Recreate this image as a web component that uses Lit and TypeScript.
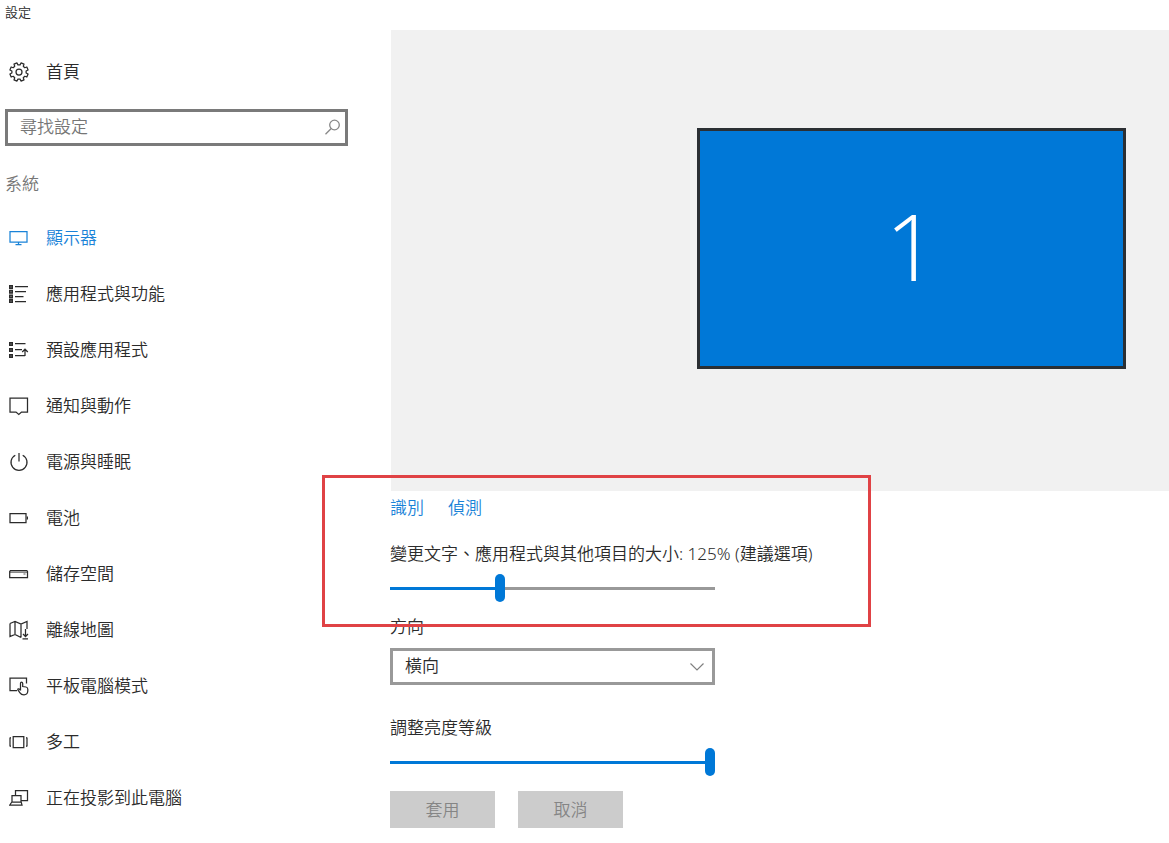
import { LitElement, html, css, svg } from "lit";
import { customElement, property, state } from "lit/decorators.js";
import { classMap } from "lit/directives/class-map.js";

/* Outline of an eight-tooth cog centred in a 20 x 20 box. */
const cogPath = (() => {
  const points: string[] = [];
  for (let i = 0; i < 8; i++) {
    const mid = 22.5 + i * 45;
    for (const [offset, radius] of [[-14, 7.2], [-10, 9.3], [10, 9.3], [14, 7.2]]) {
      const angle = ((mid + offset) * Math.PI) / 180;
      points.push(`${(10 + radius * Math.cos(angle)).toFixed(2)} ${(10 + radius * Math.sin(angle)).toFixed(2)}`);
    }
  }
  return `M${points.join("L")}Z`;
})();

const icons: Record<string, unknown> = {
  home: svg`<path d=${cogPath} stroke-linejoin="round"/><circle cx="10" cy="10" r="3"/>`,
  display: svg`<path d="M1 3.5H18V14H1Z M9.5 14V16.5 M6.5 16.5H12.5"/>`,
  apps: svg`<path class="fill" d="M0 1H4V5H0Z M0 5.7H4V9.7H0Z M0 10.4H4V14.4H0Z M0 15.1H4V19.1H0Z"/><path d="M6 2.5H19 M6 7.5H17 M6 12.5H14.5 M6 17.5H17"/><path class="dot" d="M1.5 3H2.5 M1.5 7.7H2.5 M1.5 12.4H2.5 M1.5 17.1H2.5"/>`,
  defaults: svg`<path class="fill" d="M0 2H4V6H0Z M0 8H4V12H0Z M0 14H4V18H0Z"/><path d="M6 3.5H16.5 M6 9.5H13 M6 15.5H16 M16 16V9.5 M13.2 12L16 9.2L18.8 12"/><path class="dot" d="M1.5 4H2.5 M1.5 10H2.5 M1.5 16H2.5"/>`,
  notify: svg`<path d="M1 2H18.5V16H12.5L9.8 18.5L7 16H1Z"/>`,
  power: svg`<path d="M6.3 3.2A8 8 0 1 0 13.7 3.2 M10 1V9.5"/>`,
  battery: svg`<path d="M1 5.5H17V14.5H1Z"/><path d="M18.4 8.5V11.5"/>`,
  storage: svg`<path d="M0.7 7.5L1.5 6.5H17.8L18.5 7.5V13.5H0.7Z"/><path stroke-width="0.8" d="M1 8.2H18.4 M14.5 10H16.5"/>`,
  maps: svg`<path d="M1 3.5L6 1.5L12 4L18 1.5V9 M1 3.5V16.5L6 14.5L12 17.5 M6 1.5V14.5 M12 4V17.5 M16.5 9V16.5 M14 14L16.5 16.5L19 14 M13.5 18.8H19"/>`,
  tablet: svg`<path d="M8 14.5H1V2H17.5V7.5"/><path d="M11.5 14.5V7.3Q11.5 6 12.5 6T13.7 7.3V10.5L17 11Q18.8 11.3 18.8 13.2V15Q18.5 18.8 15 18.8Q12.3 18.8 11 16.8L8.8 13.8Q8.8 12.3 10.3 13L11.5 14.3"/>`,
  multitask: svg`<path d="M4.2 4.5H14.8V15.5H4.2Z M1 5.5V14.5 M18 5.5V14.5"/><path d="M1 5.8H2 M1 14.2H2 M17 5.8H18 M17 14.2H18"/>`,
  project: svg`<path d="M6.5 7V2.5H18.5V12.5H12.5 M3 7.5H12V14H3Z M0.8 17L2.8 14H12.2L13 17Z"/>`,
};

const navItems = [
  { icon: "display", label: "顯示器" },
  { icon: "apps", label: "應用程式與功能" },
  { icon: "defaults", label: "預設應用程式" },
  { icon: "notify", label: "通知與動作" },
  { icon: "power", label: "電源與睡眠" },
  { icon: "battery", label: "電池" },
  { icon: "storage", label: "儲存空間" },
  { icon: "maps", label: "離線地圖" },
  { icon: "tablet", label: "平板電腦模式" },
  { icon: "multitask", label: "多工" },
  { icon: "project", label: "正在投影到此電腦" },
];

@customElement("nav-link")
class NavLink extends LitElement {
  @property() icon = "";
  @property() label = "";
  @property({ type: Boolean }) active = false;

  static styles = css`
    :host { display: block; }
    .link {
      display: flex;
      align-items: center;
      gap: 17px;
      height: 56px;
      padding-left: 9px;
      color: #2b2b2b;
      text-decoration: none;
    }
    .active { color: #1a83d8; }
    .icon {
      flex: none;
      width: 20px;
      height: 20px;
      fill: none;
      stroke: currentColor;
      stroke-width: 1.25;
    }
    .fill { fill: currentColor; stroke: none; }
    .dot { stroke: #fff; stroke-width: 0.6; }
  `;

  render() {
    return html`<a class=${classMap({ link: true, active: this.active })} href="#">
      <svg class="icon" viewBox="0 0 20 20" aria-hidden="true">${icons[this.icon]}</svg>
      <span>${this.label}</span>
    </a>`;
  }
}

@customElement("app-root")
class AppRoot extends LitElement {
  @state() scale = 125;
  @state() brightness = 100;

  static styles = css`
    :host {
      display: block;
      min-height: 100vh;
      background: #fff;
      color: #2b2b2b;
      font-family: "Noto Sans", "Noto Sans CJK TC", sans-serif;
      font-size: 17px;
      font-weight: 350;
      line-height: 24px;
    }
    * { box-sizing: border-box; }
    input, select, button { font: inherit; color: inherit; margin: 0; border-radius: 0; }
    .title { height: 30px; margin: 0; padding-left: 5px; font-size: 13px; font-weight: inherit; }
    .layout { display: grid; grid-template-columns: 390px minmax(0, 1fr); }
    .side { padding: 14px 42px 0 0; }
    .search { position: relative; margin: 9px 0 26px 5px; }
    .search-box {
      display: block;
      width: 100%;
      height: 37px;
      padding: 0 40px 2px 12px;
      border: 3px solid #7a7a7a;
      background: #fff;
      outline: none;
    }
    .search-box::placeholder { color: #767676; opacity: 1; }
    .search-icon {
      position: absolute;
      right: 7px;
      top: 10px;
      width: 17px;
      height: 17px;
      fill: none;
      stroke: #888;
      stroke-width: 1.3;
    }
    .group { margin: 0 0 14px; padding-left: 5px; color: #767676; font-size: inherit; font-weight: inherit; }
    .preview { display: flex; justify-content: flex-end; margin-left: 1px; padding: 98px 43px 122px; background: #f1f1f1; }
    .monitor {
      display: flex;
      align-items: center;
      justify-content: center;
      width: 62%;
      aspect-ratio: 16 / 9;
      padding-bottom: 6px;
      border: 3px solid #2b2f33;
      background: #0078d7;
      color: #fff;
      font-family: "Open Sans", sans-serif;
      font-size: 92px;
      font-weight: 300;
      line-height: 96px;
    }
    .scaling { position: relative; padding-top: 5px; }
    .highlight {
      position: absolute;
      left: -68px;
      top: -16px;
      width: 549px;
      height: 152px;
      border: 3px solid #e04245;
      pointer-events: none;
    }
    .actions { display: flex; gap: 24px; margin-bottom: 22px; }
    .action { color: #1a83d8; text-decoration: none; }
    .label { display: block; }
    .slider {
      appearance: none;
      display: block;
      width: 325px;
      max-width: 100%;
      height: 28px;
      margin-top: 8px;
      background: linear-gradient(to right, #0078d7 var(--fill), #999 var(--fill)) center / 100% 3px no-repeat;
      outline: none;
    }
    .slider::-webkit-slider-thumb {
      appearance: none;
      width: 10px;
      height: 28px;
      border-radius: 5px;
      background: #0078d7;
    }
    .orientation { margin-top: 13px; }
    .select { position: relative; width: 325px; max-width: 100%; margin: 9px 0 31px; }
    .select-box {
      appearance: none;
      display: block;
      width: 100%;
      height: 37px;
      padding: 0 36px 2px 12px;
      border: 3px solid #999;
      background: #fff;
    }
    .chevron {
      position: absolute;
      right: 10px;
      top: 14px;
      width: 16px;
      height: 10px;
      fill: none;
      stroke: #808080;
      stroke-width: 1.2;
      pointer-events: none;
    }
    .buttons { display: flex; gap: 23px; margin-top: 15px; }
    .button { width: 105px; height: 37px; padding: 0; border: 0; background: #ccc; color: #858585; }
  `;

  render() {
    const scaleFill = ((this.scale - 100) / 75) * 100;
    return html`
      <h1 class="title">設定</h1>
      <div class="layout">
        <nav class="side">
          <nav-link icon="home" label="首頁"></nav-link>
          <div class="search">
            <input class="search-box" type="text" placeholder="尋找設定" aria-label="尋找設定" />
            <svg class="search-icon" viewBox="0 0 17 17" aria-hidden="true">
              <circle cx="10.5" cy="6" r="4.8" /><path d="M7.2 9.5L1.5 15.3" />
            </svg>
          </div>
          <h2 class="group">系統</h2>
          ${navItems.map((item, i) => html`<nav-link icon=${item.icon} label=${item.label} ?active=${i === 0}></nav-link>`)}
        </nav>
        <main>
          <div class="preview"><div class="monitor">1</div></div>
          <section class="scaling">
            <div class="actions">
              <a class="action" href="#">識別</a>
              <a class="action" href="#">偵測</a>
            </div>
            <label class="label" for="scale">變更文字、應用程式與其他項目的大小: ${this.scale}% (建議選項)</label>
            <input class="slider" id="scale" type="range" min="100" max="175" step="25" .value=${String(this.scale)}
              style="--fill:${scaleFill}%"
              @input=${(e: Event) => (this.scale = Number((e.target as HTMLInputElement).value))} />
            <label class="label orientation" for="orientation">方向</label>
            <div class="highlight"></div>
          </section>
          <div class="select">
            <select class="select-box" id="orientation"><option>橫向</option></select>
            <svg class="chevron" viewBox="0 0 16 10" aria-hidden="true"><path d="M1.5 1.5L8 8L14.5 1.5" /></svg>
          </div>
          <label class="label" for="brightness">調整亮度等級</label>
          <input class="slider" id="brightness" type="range" min="0" max="100" .value=${String(this.brightness)}
            style="--fill:${this.brightness}%"
            @input=${(e: Event) => (this.brightness = Number((e.target as HTMLInputElement).value))} />
          <div class="buttons">
            <button class="button" disabled>套用</button>
            <button class="button" disabled>取消</button>
          </div>
        </main>
      </div>
    `;
  }
}
